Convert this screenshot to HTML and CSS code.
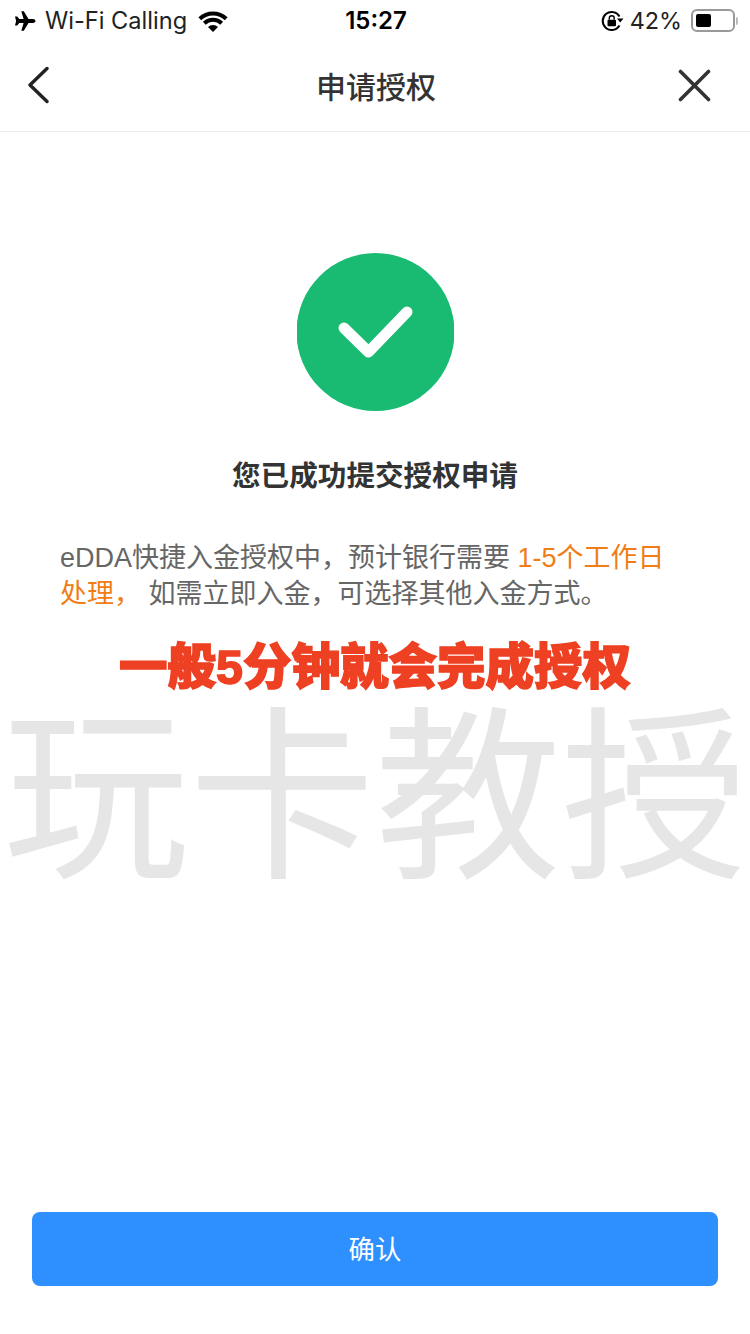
FILE: index.html
```html
<!DOCTYPE html>
<html lang="zh-CN">

<head>
    <meta charset="UTF-8">
    <meta name="viewport" content="width=device-width, initial-scale=1.0">
    <title>申请授权</title>
    <link rel="stylesheet" href="styles.css">
</head>

<body>
    <div class="page">
        <div class="statusbar">
            <div class="status-side">
                <svg class="icon-plane" width="22" height="22" viewBox="0 0 22 22">
                    <path d="M21.500 11c0-1.300-1.300-2-2.600-2h-4.400L9.800 1.200H7.300l2.300 7.800H5.200L3.300 6.600H1l1.100 4.400L1 15.400h2.300L5.200 13h4.400l-2.300 7.800h2.500l4.700-7.800h4.400c1.300 0 2.600-.7 2.600-2z" fill="#000"/>
                </svg>
                <span class="carrier">Wi-Fi Calling</span>
                <svg class="icon-wifi" width="30" height="24" viewBox="0 0 30 24">
                    <path d="M1.800 9.800a19 19 0 0 1 26.400 0M6.300 14.300a12.600 12.600 0 0 1 17.400 0" fill="none" stroke="#000" stroke-width="4"/>
                    <path d="M10 18a7 7 0 0 1 10 0l-5 5z" fill="#000"/>
                </svg>
            </div>
            <div class="clock">15:27</div>
            <div class="status-side status-right">
                <svg class="icon-lock" width="23" height="22" viewBox="0 0 23 22">
                    <path d="M18.500 15.500A9 9 0 1 1 18.500 6.500" fill="none" stroke="#000" stroke-width="2"/>
                    <path d="M16 8.500h6.500L19.200 12.500z" fill="#000"/>
                    <rect x="6.500" y="9.800" width="8.500" height="6.500" rx="1" fill="#000"/>
                    <path d="M8.300 9.800V8.200a2.450 2.450 0 0 1 4.900 0v1.600" fill="none" stroke="#000" stroke-width="1.400"/>
                </svg>
                <span class="percent">42%</span>
                <div class="battery"><div class="battery-level"></div></div>
                <div class="battery-tip"></div>
            </div>
        </div>

        <div class="navbar">
            <svg class="nav-back" width="22" height="38" viewBox="0 0 22 38">
                <path d="M20 2.500 3 19 20 35.500" fill="none" stroke="#222" stroke-width="3.400" stroke-linecap="round" stroke-linejoin="round"/>
            </svg>
            <h1 class="nav-title">申请授权</h1>
            <svg class="nav-close" width="33" height="33" viewBox="0 0 33 33">
                <path d="M2.500 2.500l28 28M30.500 2.500l-28 28" fill="none" stroke="#333" stroke-width="3.600" stroke-linecap="round"/>
            </svg>
        </div>

        <main class="content">
            <svg class="success" width="157" height="158" viewBox="0 0 157 158">
                <circle cx="78.500" cy="79" r="79" fill="#19bb72"/>
                <path d="M47 75l24.500 24L110 59" fill="none" stroke="#fff" stroke-width="11" stroke-linecap="round" stroke-linejoin="round"/>
            </svg>
            <h2 class="result-title">您已成功提交授权申请</h2>
            <p class="result-text">eDDA快捷入金授权中，预计银行需要 <span class="highlight">1-5个工作日</span><br><span class="highlight">处理，</span> 如需立即入金，可选择其他入金方式。</p>
            <p class="notice">一般5分钟就会完成授权</p>
        </main>

        <div class="footer">
            <button class="confirm">确认</button>
        </div>

        <div class="watermark">玩卡教授</div>
    </div>
</body>

</html>
```

FILE: styles.css
```css
* {
    box-sizing: border-box;
}

body {
    margin: 0;
    background: #fff;
    font-family: "Liberation Sans", "Noto Sans CJK SC", sans-serif;
}

.page {
    position: relative;
    width: 750px;
    height: 1334px;
    display: flex;
    flex-direction: column;
    overflow: hidden;
}

.statusbar {
    height: 41px;
    padding: 0 12px 0 14px;
    display: grid;
    grid-template-columns: 1fr auto 1fr;
    align-items: center;
    color: #000;
}

.status-side {
    display: flex;
    align-items: center;
}

.status-right {
    justify-content: flex-end;
}

.carrier {
    margin-left: 9px;
    font-family: Inter, "Liberation Sans", sans-serif;
    font-size: 23.6px;
    color: #222;
}

.icon-wifi {
    margin-left: 11px;
}

.clock {
    font-family: Inter, "Liberation Sans", sans-serif;
    font-weight: 600;
    font-size: 24px;
}

.percent {
    margin-left: 6px;
    font-family: Inter, "Liberation Sans", sans-serif;
    font-size: 23.4px;
    color: #222;
}

.battery {
    width: 44px;
    height: 23px;
    margin-left: 9px;
    padding: 3px;
    border: 2px solid #999;
    border-radius: 6px;
}

.battery-level {
    width: 15px;
    height: 13px;
    background: #000;
    border-radius: 2px;
}

.battery-tip {
    width: 2px;
    height: 8px;
    margin-left: 1px;
    background: #bbb;
    border-radius: 0 2px 2px 0;
}

.navbar {
    height: 91px;
    padding: 0 26px 2px 28px;
    display: grid;
    grid-template-columns: 1fr auto 1fr;
    align-items: center;
    border-bottom: 1px solid #eee;
}

.nav-back {
    margin-left: -1px;
}

.nav-close {
    justify-self: end;
    margin-right: 13px;
}

.nav-title {
    margin: 0;
    font-size: 30px;
    font-weight: 500;
    color: #333;
}

.content {
    flex: 1;
    padding: 121px 60px 0;
    display: flex;
    flex-direction: column;
    align-items: center;
}

.result-title {
    margin: 46px 0 0;
    font-size: 28.6px;
    line-height: 38px;
    font-weight: 700;
    color: #333;
}

.result-text {
    width: 630px;
    margin: 45px 0 0;
    font-size: 27px;
    line-height: 36px;
    color: #666;
}

.highlight {
    color: #f07d16;
}

.notice {
    margin: 25px 0 0;
    font-size: 48.5px;
    line-height: 60px;
    font-weight: 900;
    color: #ee4022;
    -webkit-text-stroke: 1.5px #ee4022;
    white-space: nowrap;
}

.footer {
    padding: 0 32px 48px;
}

.confirm {
    display: block;
    width: 100%;
    height: 74px;
    padding: 0 0 4px;
    border: 0;
    border-radius: 8px;
    background: #2e8fff;
    color: #fff;
    font-family: inherit;
    font-size: 26.4px;
}

/* sits over the page, stamped on the picture */
.watermark {
    position: absolute;
    left: 0;
    right: 0;
    top: 665px;
    text-align: center;
    font-size: 186px;
    line-height: 270px;
    color: rgba(200, 200, 200, 0.45);
    white-space: nowrap;
}
```
